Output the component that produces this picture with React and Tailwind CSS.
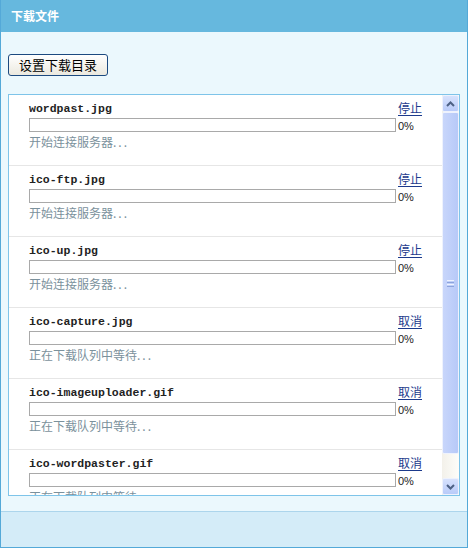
const files = [
  { name: "wordpast.jpg", action: "停止", status: "开始连接服务器" },
  { name: "ico-ftp.jpg", action: "停止", status: "开始连接服务器" },
  { name: "ico-up.jpg", action: "停止", status: "开始连接服务器" },
  { name: "ico-capture.jpg", action: "取消", status: "正在下载队列中等待" },
  { name: "ico-imageuploader.gif", action: "取消", status: "正在下载队列中等待" },
  { name: "ico-wordpaster.gif", action: "取消", status: "正在下载队列中等待" },
];

const cjk = "font-['SimSun','Noto_Sans_CJK_SC',sans-serif]";

function FileRow({ file }) {
  return (
    <div className="h-[71px] shrink-0 border-b border-[#e6e6e6] pl-[20px] pt-[6px]">
      <div className="flex h-[17px] items-start">
        <div className="w-[369px] font-['Liberation_Mono',monospace] text-[11.5px] font-bold leading-[16px] text-[#222]">
          {file.name}
        </div>
        <a
          href="#"
          className={`${cjk} text-[12px] leading-[14px] text-[#1c3a8c] underline underline-offset-2`}
        >
          {file.action}
        </a>
      </div>
      <div className="flex h-[14px] items-end">
        <div className="h-[14px] w-[367px] border border-[#a9a9a9] bg-white" />
        <span className="ml-[2px] font-['Liberation_Sans',sans-serif] text-[11px] leading-[12px] text-[#222]">
          0%
        </span>
      </div>
      <div className={`${cjk} mt-[2px] text-[12px] leading-[16px] text-[#7b919c]`}>
        {file.status}
        <span className="tracking-[2px]">...</span>
      </div>
    </div>
  );
}

function ArrowButton({ up }) {
  return (
    <div className="flex h-[17px] w-[17px] items-center justify-center rounded-[2px] border border-[#eef2fd] bg-gradient-to-b from-[#d7e2fd] to-[#b9cbf9]">
      <svg width="9" height="6" viewBox="0 0 9 6">
        <path
          d={up ? "M1 5 L4.5 1.5 L8 5" : "M1 1 L4.5 4.5 L8 1"}
          fill="none"
          stroke="#4d6185"
          strokeWidth="2"
        />
      </svg>
    </div>
  );
}

function ScrollBar() {
  return (
    <div className="flex h-full w-[17px] shrink-0 flex-col bg-gradient-to-r from-[#f3f1ea] to-[#fdfdfa]">
      <ArrowButton up />
      <div className="flex h-[342px] w-[17px] items-center justify-center rounded-[2px] border border-[#eef2fd] bg-gradient-to-r from-[#c8d6fb] to-[#b7c9f8]">
        <div className="flex flex-col gap-[1px]">
          <div className="h-[1px] w-[7px] bg-[#eef3fe]" />
          <div className="h-[1px] w-[7px] bg-[#8ca3dc]" />
          <div className="h-[1px] w-[7px] bg-[#eef3fe]" />
          <div className="h-[1px] w-[7px] bg-[#8ca3dc]" />
        </div>
      </div>
      <div className="flex-1" />
      <ArrowButton />
    </div>
  );
}

export default function App() {
  return (
    <div className="flex h-[548px] w-[468px] flex-col border-x border-b border-[#54a9d8] bg-[#ebf8fd]">
      <div className="flex h-[32px] items-center bg-[#66b8de] px-[10px]">
        <span className={`${cjk} text-[12px] font-bold text-white`}>下载文件</span>
      </div>
      <div className="flex flex-1 flex-col px-[7px]">
        <button
          className={`${cjk} mt-[22px] h-[22px] w-[100px] rounded-[3px] border border-[#1c4a80] bg-gradient-to-b from-[#ffffff] to-[#ebe9df] text-[13px] leading-[18px] text-black`}
        >
          设置下载目录
        </button>
        <div className="mt-[18px] flex h-[402px] border border-[#7ec4e9] bg-white">
          <div className="flex flex-1 flex-col overflow-hidden">
            {files.map((f) => (
              <FileRow key={f.name} file={f} />
            ))}
          </div>
          <ScrollBar />
        </div>
      </div>
      <div className="h-[36px] border-t border-[#acd5ec] bg-[#d4ecf8]" />
    </div>
  );
}
